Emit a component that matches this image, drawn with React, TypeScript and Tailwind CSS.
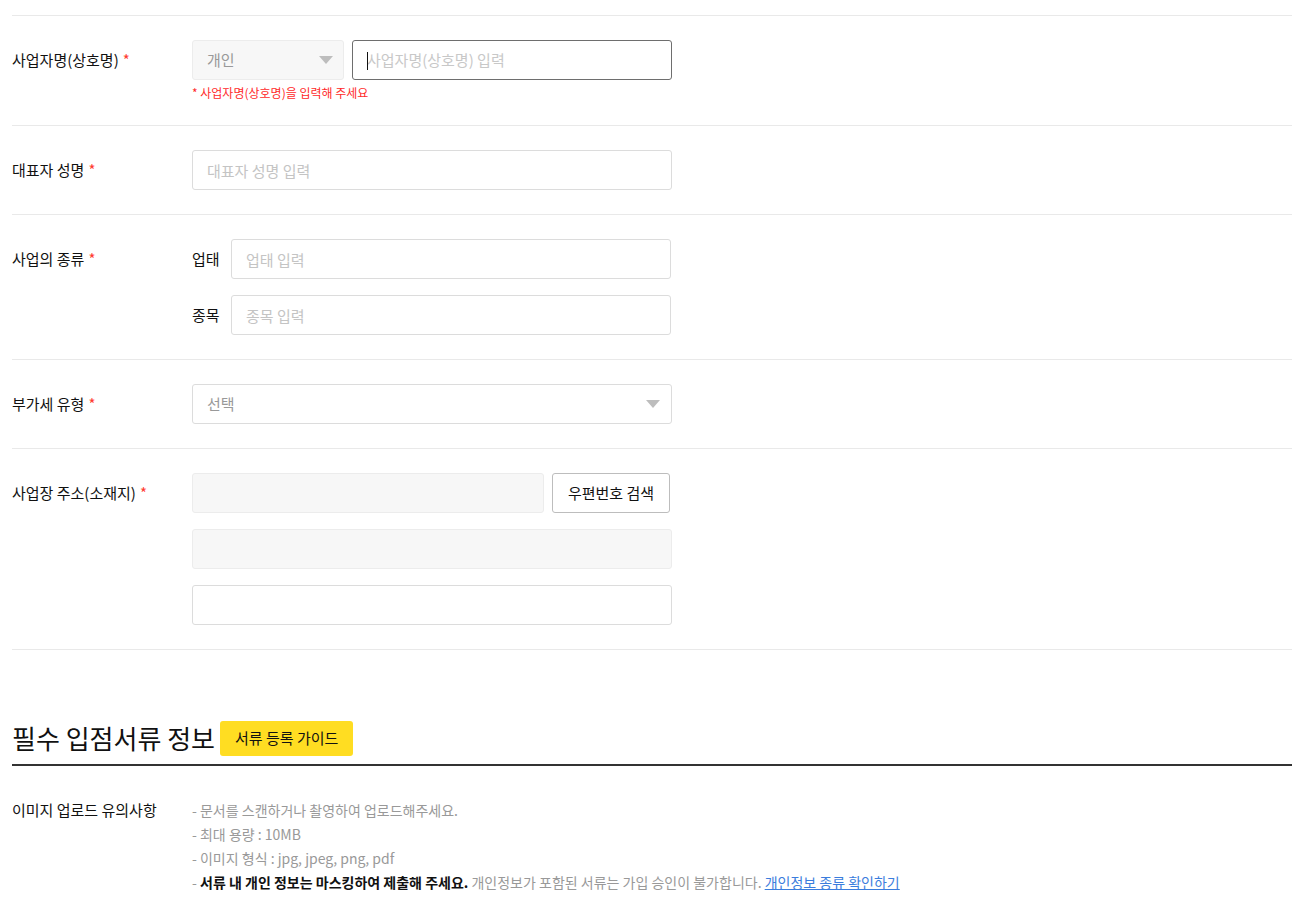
import React from 'react';

const font = { fontFamily: '"Noto Sans CJK KR", "Noto Sans", sans-serif' };

const Req = () => <span className="text-[#ff3b30] ml-1">*</span>;

const Caret = () => (
  <svg width="14" height="8" viewBox="0 0 14 8" className="shrink-0">
    <path d="M0 0 L14 0 L7 8 Z" fill="#bdbdbd" />
  </svg>
);

const Row: React.FC<{ label: string; children: React.ReactNode }> = ({ label, children }) => (
  <div className="flex border-b border-[#e9e9e9] pt-[24px] pb-[24px]">
    <div className="w-[180px] shrink-0 h-10 flex items-center text-[15px] text-[#111]">
      {label}
      <Req />
    </div>
    <div className="flex flex-col gap-4">{children}</div>
  </div>
);

const inputCls =
  'h-10 rounded-[3px] border border-[#dcdcdc] px-[14px] text-[15px] text-[#333] placeholder:text-[#c4c4c4] outline-none bg-white';

export default function App() {
  return (
    <div style={font} className="bg-white min-h-screen pl-3 pr-[15px] text-[#111]">
      <div className="border-b border-[#e9e9e9] h-[16px]" />

      <div className="flex border-b border-[#e9e9e9] pt-[24px] pb-[24px]">
        <div className="w-[180px] shrink-0 h-10 flex items-center text-[15px]">
          사업자명(상호명)
          <Req />
        </div>
        <div className="flex flex-col">
          <div className="flex gap-[8px]">
            <div className="w-[152px] h-10 rounded-[3px] border border-[#ececec] bg-[#f7f7f7] flex items-center justify-between pl-[14px] pr-[10px] text-[15px] text-[#999]">
              개인
              <Caret />
            </div>
            <div className="relative w-[320px] h-10 rounded-[3px] border border-[#6e6e6e] flex items-center px-[14px] text-[15px] text-[#c8c8c8]">
              <span className="absolute left-[14px] top-[11px] w-px h-[18px] bg-[#111]" />
              사업자명(상호명) 입력
            </div>
          </div>
          <div className="mt-[5px] text-[12px] leading-[16px] text-[#ff2a2a]">* 사업자명(상호명)을 입력해 주세요</div>
        </div>
      </div>

      <Row label="대표자 성명">
        <input className={`${inputCls} w-[480px]`} placeholder="대표자 성명 입력" style={font} />
      </Row>

      <Row label="사업의 종류">
        <div className="flex items-center">
          <span className="w-[39px] text-[15px]">업태</span>
          <input className={`${inputCls} w-[440px]`} placeholder="업태 입력" style={font} />
        </div>
        <div className="flex items-center">
          <span className="w-[39px] text-[15px]">종목</span>
          <input className={`${inputCls} w-[440px]`} placeholder="종목 입력" style={font} />
        </div>
      </Row>

      <Row label="부가세 유형">
        <div className="w-[480px] h-10 rounded-[3px] border border-[#dcdcdc] flex items-center justify-between pl-[14px] pr-[11px] text-[15px] text-[#999]">
          선택
          <Caret />
        </div>
      </Row>

      <Row label="사업장 주소(소재지)">
        <div className="flex gap-[8px]">
          <div className="w-[352px] h-10 rounded-[3px] border border-[#ececec] bg-[#f7f7f7]" />
          <button className="w-[118px] h-10 rounded-[3px] border border-[#bdbdbd] bg-white text-[15px] text-[#111]" style={font}>
            우편번호 검색
          </button>
        </div>
        <div className="w-[480px] h-10 rounded-[3px] border border-[#ececec] bg-[#f7f7f7]" />
        <input className={`${inputCls} w-[480px]`} style={font} />
      </Row>

      <div className="mt-[70px] flex items-center gap-[5px] pb-[8px] border-b-2 border-[#333]">
        <h2 className="text-[26px] leading-[36px] text-[#111]">필수 입점서류 정보</h2>
        <button className="h-[35px] px-[15px] rounded-[3px] bg-[#ffdd22] text-[15px] text-[#111]" style={font}>
          서류 등록 가이드
        </button>
      </div>

      <div className="flex pt-[32px]">
        <div className="w-[180px] shrink-0 text-[15px] leading-[24px]">이미지 업로드 유의사항</div>
        <ul className="text-[14px] leading-[24px] text-[#999]">
          <li>- 문서를 스캔하거나 촬영하여 업로드해주세요.</li>
          <li>- 최대 용량 : 10MB</li>
          <li>- 이미지 형식 : jpg, jpeg, png, pdf</li>
          <li>
            - <b className="font-bold text-[#111]">서류 내 개인 정보는 마스킹하여 제출해 주세요.</b> 개인정보가 포함된 서류는 가입 승인이 불가합니다.{' '}
            <a className="text-[#3b7ddd] underline">개인정보 종류 확인하기</a>
          </li>
        </ul>
      </div>
    </div>
  );
}
